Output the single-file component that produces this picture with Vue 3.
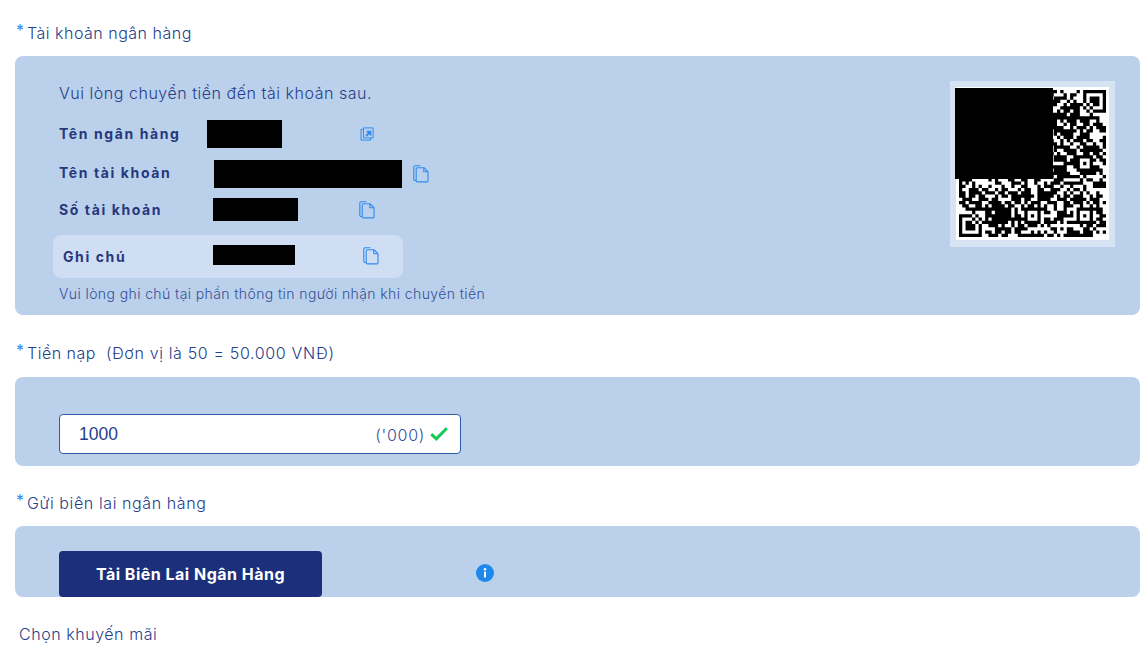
<script setup>
const size = 45
const finders = [[38, 0], [0, 38]]
const aligns = [[20, 20], [36, 20], [20, 36], [36, 36], [4, 36], [36, 4], [20, 4], [4, 20]]

// fake qr pattern, the real one is not readable anyway
function buildPath() {
  let d = ''
  let seed = 73421
  for (let y = 0; y < size; y++) {
    for (let x = 0; x < size; x++) {
      seed = (seed * 1103515245 + 12345) & 0x7fffffff
      const inFinder = finders.some(([fx, fy]) => x >= fx - 1 && x < fx + 8 && y >= fy - 1 && y < fy + 8)
      const inAlign = aligns.some(([ax, ay]) => x >= ax && x < ax + 5 && y >= ay && y < ay + 5)
      if (!inFinder && !inAlign && (seed >> 16) % 100 < 56) d += `M${x} ${y}h1v1h-1z`
    }
  }
  for (const [fx, fy] of finders) {
    d += `M${fx} ${fy}h7v7h-7zM${fx + 1} ${fy + 1}v5h5v-5zM${fx + 2} ${fy + 2}h3v3h-3z`
  }
  for (const [ax, ay] of aligns) {
    d += `M${ax} ${ay}h5v5h-5zM${ax + 1} ${ay + 1}v3h3v-3zM${ax + 2} ${ay + 2}h1v1h-1z`
  }
  return d
}
const qrPath = buildPath()
</script>

<template>
  <div class="page">
    <div class="label"><span class="star">*</span>Tài khoản ngân hàng</div>
    <div class="panel bank">
      <div class="info">
        <p class="intro">Vui lòng chuyển tiền đến tài khoản sau.</p>
        <div class="row row-bank">
          <span class="key">Tên ngân hàng</span>
          <span class="mask mask-bank"></span>
          <svg class="icon icon-open" viewBox="0 0 14 14" fill="none" stroke="#2f8bf0" stroke-width="1">
            <path d="M3.5 .9h9.6v10h-9.6z" />
            <path d="M3.4 2.4H1v10.7h9.6v-2" />
            <path d="M6 9l3.6-3.6M6.6 4.6h3.8v3.8" stroke-width="1.9" />
          </svg>
        </div>
        <div class="row row-name">
          <span class="key">Tên tài khoản</span>
          <span class="mask mask-name"></span>
          <svg class="icon icon-copy" viewBox="0 0 16 18" fill="none" stroke="#2f8bf0" stroke-width="1.1">
            <path d="M3 15.5H2.2A1.4 1.4 0 0 1 .8 14V2.1A1.4 1.4 0 0 1 2.2.7h5.2" />
            <path d="M3.2 4a1.2 1.2 0 0 1 1.2-1.2h6.7l3.9 4v8.9a1.2 1.2 0 0 1-1.2 1.2H4.4a1.2 1.2 0 0 1-1.2-1.2z" />
            <path d="M10.8 2.8v4h4" />
          </svg>
        </div>
        <div class="row row-number">
          <span class="key">Số tài khoản</span>
          <span class="mask mask-number"></span>
          <svg class="icon icon-copy" viewBox="0 0 16 18" fill="none" stroke="#2f8bf0" stroke-width="1.1">
            <path d="M3 15.5H2.2A1.4 1.4 0 0 1 .8 14V2.1A1.4 1.4 0 0 1 2.2.7h5.2" />
            <path d="M3.2 4a1.2 1.2 0 0 1 1.2-1.2h6.7l3.9 4v8.9a1.2 1.2 0 0 1-1.2 1.2H4.4a1.2 1.2 0 0 1-1.2-1.2z" />
            <path d="M10.8 2.8v4h4" />
          </svg>
        </div>
        <div class="row row-note">
          <span class="key">Ghi chú</span>
          <span class="mask mask-note"></span>
          <svg class="icon icon-copy" viewBox="0 0 16 18" fill="none" stroke="#2f8bf0" stroke-width="1.1">
            <path d="M3 15.5H2.2A1.4 1.4 0 0 1 .8 14V2.1A1.4 1.4 0 0 1 2.2.7h5.2" />
            <path d="M3.2 4a1.2 1.2 0 0 1 1.2-1.2h6.7l3.9 4v8.9a1.2 1.2 0 0 1-1.2 1.2H4.4a1.2 1.2 0 0 1-1.2-1.2z" />
            <path d="M10.8 2.8v4h4" />
          </svg>
        </div>
        <p class="hint">Vui lòng ghi chú tại phần thông tin người nhận khi chuyển tiền</p>
      </div>
      <div class="qr-frame">
        <div class="qr-white">
          <svg class="qr" :viewBox="`0 0 ${size} ${size}`">
            <path fill-rule="evenodd" :d="qrPath" />
          </svg>
          <span class="qr-mask"></span>
        </div>
      </div>
    </div>

    <div class="label label-amount"><span class="star">*</span>Tiền nạp &nbsp;<span class="unit-note">(Đơn vị là 50 = 50.000 VNĐ)</span></div>
    <div class="panel amount">
      <div class="input">
        <span class="value">1000</span>
        <span class="unit">('000)</span>
        <svg class="check" viewBox="0 0 18 14" fill="none" stroke="#16c954" stroke-width="3">
          <path d="M1.3 7.2l5 4.7 10.5-10.7" />
        </svg>
      </div>
    </div>

    <div class="label label-receipt"><span class="star">*</span>Gửi biên lai ngân hàng</div>
    <div class="panel receipt">
      <button class="upload" type="button">Tải Biên Lai Ngân Hàng</button>
      <svg class="info-icon" viewBox="0 0 18 18">
        <circle cx="9" cy="9" r="9" fill="#1e88ec" />
        <rect x="8" y="7.6" width="2" height="6" rx=".6" fill="#fff" />
        <circle cx="9" cy="5.3" r="1.2" fill="#fff" />
      </svg>
    </div>

    <div class="promo">Chọn khuyến mãi</div>
  </div>
</template>

<style scoped>
.page {
  width: 1140px;
  height: 653px;
  overflow: hidden;
  box-sizing: border-box;
  padding: 22px 0 0 15px;
  background: #fff;
  color: #26408c;
  font-family: Inter, "Noto Sans", sans-serif;
  font-size: 16px;
  font-weight: 300;
  letter-spacing: .5px;
}
.label {
  height: 22px;
  line-height: 22px;
  padding-left: 1px;
}
.star {
  display: inline-block;
  width: 11px;
  line-height: 1;
  vertical-align: 3px;
  font-weight: 400;
  color: #2f8bf0;
  letter-spacing: 0;
}
.label-amount {
  margin-top: 27px;
}
.unit-note {
  letter-spacing: .65px;
}
.label-receipt {
  margin-top: 26px;
  letter-spacing: .6px;
}
.panel {
  background: #bbd0ea;
  border-radius: 8px;
  margin-top: 12px;
  box-sizing: border-box;
}
.bank {
  height: 259px;
  padding: 25px 25px 0 44px;
  display: flex;
  justify-content: space-between;
  align-items: flex-start;
}
.info {
  width: 440px;
}
.intro {
  margin: 0;
  height: 24px;
  line-height: 24px;
  letter-spacing: .53px;
}
.row {
  display: flex;
  align-items: center;
}
.key {
  font-size: 14px;
  font-weight: 700;
  letter-spacing: 1.6px;
  color: #26387c;
  white-space: nowrap;
}
.mask {
  display: block;
  background: #000;
  flex: none;
}
.icon {
  display: block;
  flex: none;
}
.icon-open {
  width: 14px;
  height: 14px;
  margin-left: 78px;
}
.icon-copy {
  width: 16px;
  height: 18px;
}
.row-bank {
  margin-top: 15px;
}
.row-bank .key {
  width: 148px;
  margin-top: -2px;
}
.mask-bank {
  width: 75px;
  height: 28px;
}
.row-name {
  margin-top: 12px;
}
.row-name .key {
  width: 155px;
  margin-top: -3px;
}
.mask-name {
  width: 188px;
  height: 28px;
}
.row-name .icon-copy {
  margin-left: 11px;
}
.row-number {
  margin-top: 10px;
}
.row-number .key {
  width: 154px;
}
.mask-number {
  width: 85px;
  height: 23px;
}
.row-number .icon-copy {
  margin-left: 61px;
}
.row-note {
  margin: 14px 0 0 -6px;
  width: 350px;
  height: 43px;
  box-sizing: border-box;
  padding-left: 10px;
  background: #cfdef2;
  border-radius: 8px;
}
.row-note .key {
  width: 150px;
}
.mask-note {
  width: 82px;
  height: 20px;
  margin-top: -3px;
}
.row-note .icon-copy {
  margin: -2px 0 0 68px;
}
.hint {
  margin: 7px 0 0;
  font-size: 14px;
  line-height: 18px;
  letter-spacing: .4px;
  white-space: nowrap;
  color: #34509a;
}
.qr-frame {
  width: 165px;
  height: 166px;
  box-sizing: border-box;
  padding: 6px;
  background: #d6e3f3;
}
.qr-white {
  position: relative;
  width: 153px;
  height: 153px;
  background: #fff;
  box-sizing: border-box;
  padding: 3px;
}
.qr {
  display: block;
  width: 147px;
  height: 147px;
}
.qr-mask {
  position: absolute;
  left: -1px;
  top: 1px;
  width: 98px;
  height: 91px;
  background: #000;
}
.amount {
  height: 89px;
  margin-top: 13px;
  padding: 37px 0 0 44px;
}
.input {
  width: 402px;
  height: 40px;
  box-sizing: border-box;
  display: flex;
  align-items: center;
  padding: 0 12px 0 19px;
  background: #fff;
  border: 1px solid #2f5aa8;
  border-radius: 4px;
}
.value {
  flex: 1;
  font-family: "Liberation Sans", sans-serif;
  font-size: 17.5px;
  font-weight: 400;
  letter-spacing: 0;
}
.unit {
  color: #34509a;
  margin-top: 1px;
  letter-spacing: .7px;
}
.check {
  width: 18px;
  height: 14px;
  margin-left: 5px;
}
.receipt {
  height: 71px;
  padding: 25px 0 0 44px;
  display: flex;
  align-items: flex-start;
}
.upload {
  width: 263px;
  height: 46px;
  border: none;
  border-radius: 4px;
  background: #1b2f7a;
  color: #fff;
  font-family: inherit;
  font-size: 16px;
  font-weight: 700;
  letter-spacing: .5px;
}
.info-icon {
  display: block;
  width: 18px;
  height: 18px;
  margin: 13px 0 0 154px;
}
.promo {
  margin: 26px 0 0 4px;
  height: 22px;
  line-height: 22px;
  letter-spacing: .55px;
}
</style>
